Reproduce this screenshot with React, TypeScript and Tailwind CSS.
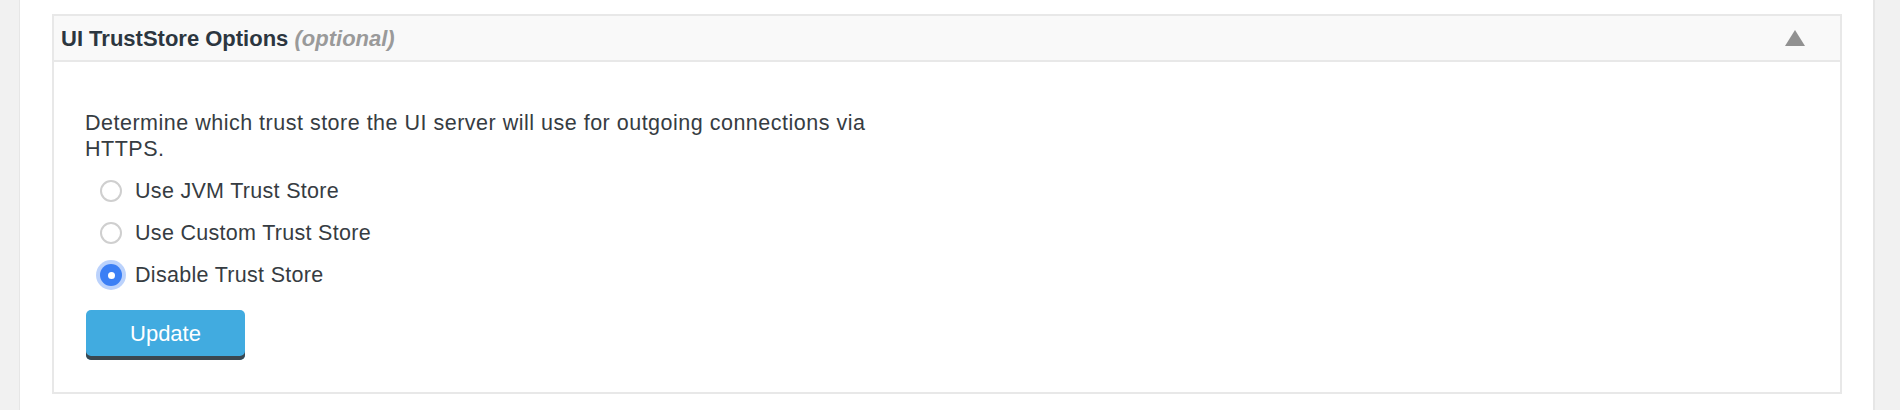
import { useState } from "react";

type TrustStoreOption = "jvm" | "custom" | "disabled";

const options: { value: TrustStoreOption; label: string }[] = [
  { value: "jvm", label: "Use JVM Trust Store" },
  { value: "custom", label: "Use Custom Trust Store" },
  { value: "disabled", label: "Disable Trust Store" },
];

function RadioDot({ checked }: { checked: boolean }) {
  if (checked) {
    return (
      <span className="flex h-[22px] w-[22px] shrink-0 items-center justify-center rounded-full bg-[#3b7ff5] shadow-[0_0_0_4px_rgba(59,127,245,0.35)]">
        <span className="h-[7px] w-[7px] rounded-full bg-white" />
      </span>
    );
  }
  return (
    <span className="h-[22px] w-[22px] shrink-0 rounded-full border-2 border-[#cfcfcf] bg-white" />
  );
}

export default function App() {
  const [selected, setSelected] = useState<TrustStoreOption>("disabled");
  const [open, setOpen] = useState(true);

  return (
    <div
      className="flex h-[410px] w-full bg-white text-[#363c42]"
      style={{ fontFamily: '"Liberation Sans", Arial, sans-serif' }}
    >
      <div className="w-[20px] shrink-0 border-r border-[#e6e6e6] bg-[#f1f1f1]" />

      <div className="flex-1 pl-[32px] pr-[31px] pt-[14px]">
        <section className="border-2 border-[#e8e8e8] bg-white">
          <header className="flex h-[46px] items-center justify-between border-b-2 border-[#e8e8e8] bg-[#f9f9f9] pl-[7px] pr-[35px]">
            <h2 className="text-[22px] font-bold text-[#2c3640]">
              UI TrustStore Options{" "}
              <span className="italic text-[#9a9a9a]">(optional)</span>
            </h2>
            <button
              className="h-0 w-0 border-x-[10px] border-b-[16px] border-x-transparent border-b-[#919191]"
              onClick={() => setOpen(!open)}
              type="button"
              aria-label="Toggle section"
            />
          </header>

          {open && (
            <div className="pb-[32px] pl-[31px] pr-[31px] pt-[48px]">
              <p className="max-w-[840px] text-[21.5px] leading-[26px] tracking-[0.5px]">
                Determine which trust store the UI server will use for outgoing
                connections via HTTPS.
              </p>

              <div className="mt-[8px] grid">
                {options.map((option) => (
                  <label
                    className="flex h-[42px] cursor-pointer items-center gap-[13px] pl-[15px] text-[21.5px] tracking-[0.3px]"
                    key={option.value}
                    onClick={() => setSelected(option.value)}
                  >
                    <RadioDot checked={selected === option.value} />
                    <span>{option.label}</span>
                  </label>
                ))}
              </div>

              <button
                className="ml-px mt-[14px] h-[50px] w-[159px] rounded-[5px] bg-[#41abe0] pb-[4px] text-[22px] text-white shadow-[inset_0_-4px_0_#3a4750]"
                type="button"
              >
                Update
              </button>
            </div>
          )}
        </section>
      </div>

      <div className="w-[27px] shrink-0 border-l-2 border-[#e6e6e6] bg-[#f1f1f1]" />
    </div>
  );
}
